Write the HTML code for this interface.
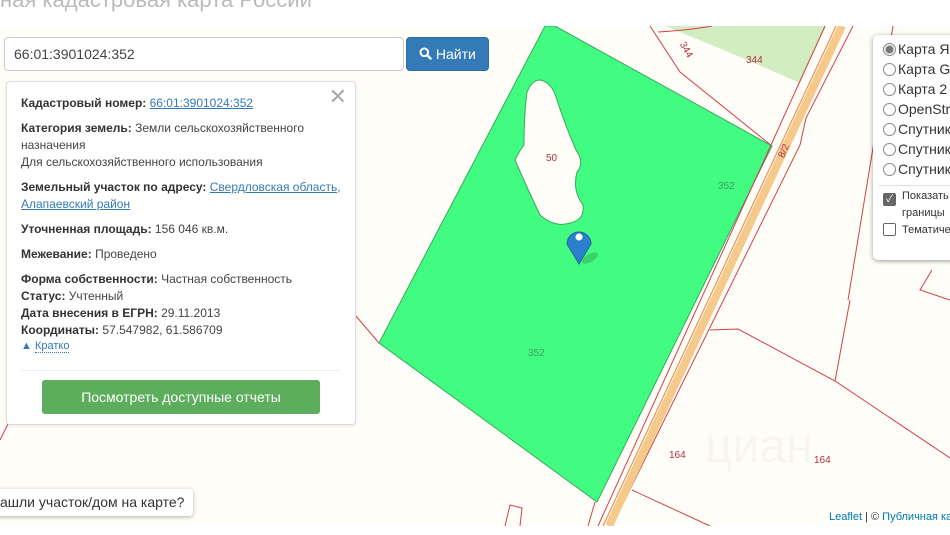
<!DOCTYPE html>
<html><head><meta charset="utf-8"><style>
*{box-sizing:border-box;margin:0;padding:0}
body{width:950px;height:535px;overflow:hidden;background:#fff;font-family:"Liberation Sans","Noto Sans CJK SC",sans-serif;position:relative}
.title{position:absolute;left:0;top:-13px;font-size:22px;color:#bbb;white-space:nowrap}
.map{position:absolute;left:0;top:26px;width:950px;height:500px;background:#fffdf7;overflow:hidden}
svg{position:absolute;left:0;top:0}
.search{position:absolute;left:4px;top:37px;width:400px;height:34px;border:1px solid #ccc;border-radius:4px;background:#fff;font-size:14px;color:#444;padding:8px 9px}
.btn{position:absolute;left:406px;top:37px;width:83px;height:34px;background:#337ab7;border-radius:4px;color:#fff;font-size:14px;padding:8px 0 0 12px;border:1px solid #2e6da4}
.panel{position:absolute;left:6px;top:81px;width:350px;height:344px;background:#fff;border:1px solid #ddd;border-radius:4px;box-shadow:0 1px 3px rgba(0,0,0,.1);font-size:12px;color:#444;padding:13px 14px}
.panel b{color:#333}
.panel a{color:#337ab7;text-decoration:underline}
.panel p{line-height:17px;margin-bottom:8px}
.close{position:absolute;right:8px;top:2px;font-size:22px;color:#aaa}
.green{position:absolute;left:35px;top:298px;width:278px;height:34px;background:#5cad5c;border-radius:3px;color:#fff;font-size:14px;text-align:center;line-height:34px}
.layers{position:absolute;left:873px;top:35px;width:90px;height:225px;background:#fff;border-radius:5px;box-shadow:0 1px 5px rgba(0,0,0,.4);font-size:14px;color:#333;padding:6px 0 0 10px}
.layers div{height:20px;white-space:nowrap}
.rad{display:inline-block;width:13px;height:13px;border:1px solid #888;border-radius:50%;vertical-align:-2px;margin-right:2px}
.hint{position:absolute;left:-8px;top:489px;height:27px;background:#fff;border-radius:4px;box-shadow:0 1px 4px rgba(0,0,0,.3);font-size:14px;color:#333;padding:5px 9px 0 8px}
.attr{position:absolute;left:826px;top:511px;font-size:11px;color:#333;background:rgba(255,255,255,.7);padding:0 3px;white-space:nowrap}
.attr a{color:#0078a8}
</style></head><body>
<div class="title">ная кадастровая карта России</div>
<div class="map">
<svg width="950" height="500" viewBox="0 26 950 500">
<path d="M665 26 Q720 48 800 83 L826 26 Z" fill="#d2eec0"/>
<path d="M650 26 L680 72 L772 146" stroke="#d0404a" fill="none" stroke-width="1"/>
<path d="M658 32 Q690 30 712 26" stroke="#d0404a" fill="none"/>
<path d="M545 26 L555 26 L772 146 L597 502 L379 343 Z" fill="#42fc82" stroke="#3aa860" stroke-width="1"/>
<path d="M540 80 Q552 82 557 100 Q565 125 576 150 Q585 163 577 172 Q572 190 583 205 Q585 220 570 223 Q555 228 540 215 Q528 190 515 160 Q520 150 524 145 Q524 115 527 92 Q532 80 540 80 Z" fill="#fffdf7" stroke="#3aa860"/>
<path d="M825 26 L598 526" stroke="#d0404a" stroke-width="1" fill="none"/>
<path d="M853 26 L806 118 L800 145 L612 526" stroke="#d0404a" stroke-width="1" fill="none"/>
<path d="M842 26 L609 526" stroke="#f5c98a" stroke-width="8" fill="none"/>
<path d="M836 26 L603 526" stroke="#e8945a" stroke-width="1.2" fill="none"/>
<path d="M710 330 L738 329 L835 381 L950 458" stroke="#d0404a" fill="none"/>
<path d="M850 300 L835 381" stroke="#d0404a" fill="none"/>
<path d="M893 26 L848 300" stroke="#d0404a" fill="none"/>
<path d="M932 270 L920 290 L950 300" stroke="#d0404a" fill="none"/>
<path d="M632 490 L710 526" stroke="#d0404a" fill="none"/>
<path d="M595 502 L588 526 M505 526 L510 505 L522 508 L520 526" stroke="#d0404a" fill="none"/>
<path d="M355 315 L379 343 M10 420 L0 440" stroke="#d0404a" fill="none"/>
<text x="546" y="161" font-size="10" fill="#b03040" font-family="Liberation Sans">50</text>
<text x="718" y="189" font-size="10" fill="#40a060" font-family="Liberation Sans">352</text>
<text x="528" y="356" font-size="10" fill="#40a060" font-family="Liberation Sans">352</text>
<text x="746" y="63" font-size="10" fill="#b03040" font-family="Liberation Sans">344</text>
<text x="676" y="50" font-size="10" fill="#b03040" font-family="Liberation Sans" transform="rotate(60 683 50)">344</text>
<text x="775" y="155" font-size="10" fill="#b03040" font-family="Liberation Sans" transform="rotate(-65 782 150)">8/2</text>
<text x="669" y="458" font-size="10" fill="#b03040" font-family="Liberation Sans">164</text>
<text x="814" y="463" font-size="10" fill="#b03040" font-family="Liberation Sans">164</text>
<text x="705" y="462" font-size="48" fill="#f7f5ef" font-family="Liberation Sans">циан</text>
<ellipse cx="590" cy="258" rx="9" ry="4" fill="#2a8040" opacity="0.35" transform="rotate(-30 590 258)"/>
<path d="M579 264 L567 244 A12 12 0 1 1 591 244 Z" fill="#2a81cb" stroke="#2565a0" stroke-width="1"/>
<circle cx="579" cy="237" r="3.5" fill="#fff"/>
</svg>
</div>
<div class="search">66:01:3901024:352</div>
<div class="btn"><svg width="13" height="13" viewBox="0 0 13 13" style="position:static;vertical-align:-1px"><circle cx="5.3" cy="5.3" r="3.8" fill="none" stroke="#fff" stroke-width="2"/><path d="M8 8 L11.5 11.5" stroke="#fff" stroke-width="2.4" stroke-linecap="round"/></svg> Найти</div>
<div class="panel">
<span class="close">✕</span>
<p><b>Кадастровый номер:</b> <a>66:01:3901024:352</a></p>
<p><b>Категория земель:</b> Земли сельскохозяйственного назначения<br>Для сельскохозяйственного использования</p>
<p><b>Земельный участок по адресу:</b> <a>Свердловская область, Алапаевский район</a></p>
<p><b>Уточненная площадь:</b> 156 046 кв.м.</p>
<p><b>Межевание:</b> Проведено</p>
<p style="margin-bottom:0"><b>Форма собственности:</b> Частная собственность<br><b>Статус:</b> Учтенный<br><b>Дата внесения в ЕГРН:</b> 29.11.2013<br><b>Координаты:</b> 57.547982, 61.586709</p>
<div style="font-size:11px;color:#337ab7;margin-top:1px">▲ <span style="border-bottom:1px dotted #337ab7">Кратко</span></div>
<div style="position:absolute;left:14px;right:14px;top:288px;border-top:1px solid #eee"></div>
<div class="green">Посмотреть доступные отчеты</div>
</div>
<div class="layers">
<div><span class="rad" style="background:radial-gradient(#777 45%,#eee 55%)"></span>Карта Я</div>
<div><span class="rad"></span>Карта G</div>
<div><span class="rad"></span>Карта 2</div>
<div><span class="rad"></span>OpenStr</div>
<div><span class="rad"></span>Спутник</div>
<div><span class="rad"></span>Спутник</div>
<div><span class="rad"></span>Спутник</div>
<div style="border-top:1px solid #ddd;margin:4px 0 0 -4px;height:4px"></div>
<div style="font-size:11px;line-height:15px;height:34px"><span style="display:inline-block;width:13px;height:13px;background:#666;border-radius:2px;vertical-align:-3px;margin-right:6px;color:#fff;font-size:10px;text-align:center;line-height:13px">✓</span>Показать<br><span style="margin-left:19px">границы</span></div>
<div style="font-size:11px"><span style="display:inline-block;width:13px;height:13px;border:1px solid #666;border-radius:2px;vertical-align:-3px;margin-right:6px"></span>Тематиче</div>
</div>
<div class="hint">ашли участок/дом на карте?</div>
<div class="attr"><a>Leaflet</a> | © <a>Публичная ка</a></div>
</body></html>
